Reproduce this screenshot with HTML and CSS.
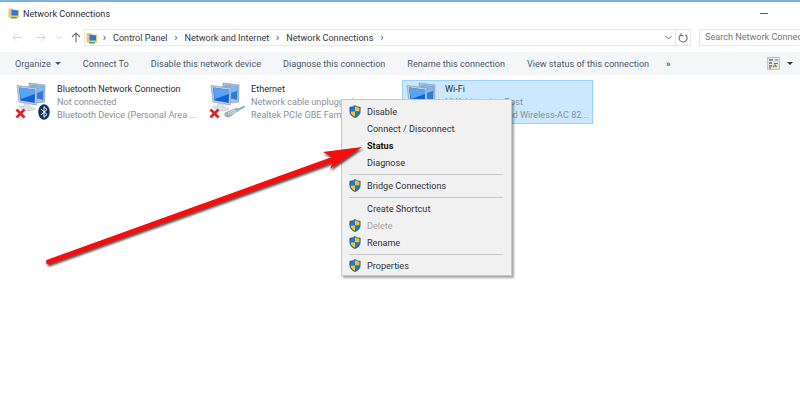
FILE: index.html
```html
<!DOCTYPE html>
<html lang="en">
<head>
<meta charset="utf-8">
<title>Network Connections</title>
<link rel="stylesheet" href="styles.css">
</head>
<body>
<svg class="defs" width="0" height="0" aria-hidden="true">
  <defs>
    <symbol id="shield" viewBox="0 0 12 13">
      <path d="M6 .4C4.500 1.500 2.800 2 .8 2.100V6.500C.8 9.500 3 11.600 6 12.700 9 11.600 11.200 9.500 11.200 6.500V2.100C9.200 2 7.500 1.500 6 .4Z" fill="#1f5f9e" stroke="#4a5a68" stroke-width=".6"/>
      <path d="M6 1.300V6.400H1.600V2.800C3.300 2.700 4.800 2.200 6 1.300Z" fill="#1a78d0"/>
      <path d="M6 1.300C7.200 2.200 8.700 2.700 10.400 2.800V6.400H6Z" fill="#f2c230"/>
      <path d="M1.600 6.400H6V11.700C3.600 10.700 1.700 9 1.600 6.400Z" fill="#f2c230"/>
      <path d="M6 6.400H10.400C10.300 9 8.400 10.700 6 11.700Z" fill="#1a78d0"/>
    </symbol>
    <symbol id="computers" viewBox="0 0 30 32">
      <path d="M13 1 29 3 28.500 20 22 21 13 14Z" fill="#a9c2da" stroke="#8f9aa5" stroke-width=".7"/>
      <path d="M15 3 27.500 4.600 27 18 15 15Z" fill="#2d7be0"/>
      <path d="M15 3 27.500 4.600 27 9 17 12Z" fill="#7db8f2"/>
      <path d="M1 3.500 21 6 20.500 23 3 20Z" fill="#c3cfda" stroke="#8f9aa5" stroke-width=".7"/>
      <path d="M3 5.500 19.200 7.700 18.800 21 4.500 18.500Z" fill="#0f62dc"/>
      <path d="M3 5.500 19.200 7.700 18.900 12 5 17Z" fill="#58a4f0"/>
      <path d="M8 21 13 21.800 13 24.500C16 25 19 26 19 27.500L13 29C8 28.500 3 26 3 24.500 5 24 7 24 8 24Z" fill="#dfe3e7" stroke="#a9b0b7" stroke-width=".5"/>
    </symbol>
    <symbol id="redx" viewBox="0 0 11 11">
      <path d="M1.500 1.500 9.500 9.500M9.500 1.500 1.500 9.500" stroke="#d9232a" stroke-width="2.700" fill="none"/>
    </symbol>
  </defs>
</svg>

<div class="window">
  <header class="titlebar">
    <svg class="title-icon" viewBox="0 0 12 12" width="12" height="12"><path d="M.5 1.500H4.500L5.500 3H11V10.500H.5Z" fill="#e8c873"/><path d="M3.500 2.500 10 3.500V8.500H3.500Z" fill="#2d78d8"/><path d="M3 10H9V11.500H3Z" fill="#3fae5a"/></svg>
    <span class="title-text">Network Connections</span>
    <span class="minimize"></span>
  </header>

  <nav class="addressbar">
    <div class="nav-buttons">
      <svg class="back" width="10" height="9" viewBox="0 0 10 9"><path d="M9.500 4.500H1M4.500 1 1 4.500 4.500 8" fill="none" stroke="#d4d7da"/></svg>
      <svg class="forward" width="10" height="9" viewBox="0 0 10 9"><path d="M.5 4.500H9M5.500 1 9 4.500 5.500 8" fill="none" stroke="#d4d7da"/></svg>
      <svg class="recent" width="6" height="5" viewBox="0 0 6 5"><path d="M.5 1 3 3.500 5.500 1" fill="none" stroke="#d4d7da"/></svg>
      <svg class="up" width="10" height="11" viewBox="0 0 10 11"><path d="M5 10.500V1M1 5 5 1 9 5" fill="none" stroke="#6a6f74" stroke-width="1.100"/></svg>
    </div>
    <div class="path-box">
      <div class="crumbs">
        <svg class="crumb-icon" viewBox="0 0 12 12" width="12" height="12"><path d="M.5 1H4.500L5.500 2.500H11V10.500H.5Z" fill="#e8c873"/><path d="M3.500 2.500 10 3.500V8.500H3.500Z" fill="#2d78d8"/><path d="M3 10H9V11.500H3Z" fill="#3fae5a"/></svg>
        <span class="sep">›</span><span>Control Panel</span>
        <span class="sep">›</span><span>Network and Internet</span>
        <span class="sep">›</span><span>Network Connections</span>
        <span class="sep">›</span>
      </div>
      <svg class="dropdown" width="7" height="5" viewBox="0 0 7 5"><path d="M.5 1 3.500 4 6.500 1" fill="none" stroke="#6a6f74"/></svg>
      <div class="refresh">
        <svg width="10" height="10" viewBox="0 0 10 10"><path d="M7.500 1.800A4 4 0 1 1 3 1.600M3 .2V2.600H5.400" fill="none" stroke="#6a6f74" stroke-width="1.100"/></svg>
      </div>
    </div>
    <div class="search-box">Search Network Connections</div>
  </nav>

  <div class="toolbar">
    <span class="tool organize">Organize<i class="caret"></i></span>
    <span class="tool">Connect To</span>
    <span class="tool">Disable this network device</span>
    <span class="tool">Diagnose this connection</span>
    <span class="tool">Rename this connection</span>
    <span class="tool">View status of this connection</span>
    <span class="tool more">»</span>
    <span class="view-options">
      <svg width="13" height="13" viewBox="0 0 13 13"><rect x=".5" y=".5" width="12" height="12" fill="#e4e6e8" stroke="#c4c7ca"/><path d="M2 3H6M2 6H5M2 9H5" stroke="#6a7680" stroke-width="1.400"/><path d="M8 3H11M7 6.500H11" stroke="#6a7680"/><path d="M6 10 8 8 9.500 10" fill="none" stroke="#5aa53a" stroke-width="1.400"/><rect x="2" y="10" width="2" height="2" fill="#d99a3a"/></svg>
      <i class="caret dark"></i>
    </span>
  </div>

  <main class="connections">
    <article class="conn">
      <div class="conn-icon">
        <svg class="pc" width="30" height="32"><use href="#computers"/></svg>
        <svg class="x" width="11" height="11"><use href="#redx"/></svg>
        <svg class="badge" width="12" height="16" viewBox="0 0 12 16"><ellipse cx="6" cy="8" rx="5.800" ry="7.800" fill="#12375f"/><path d="M3 5 9 10.500 6 13.300V2.700L9 5.500 3 11" fill="none" stroke="#fff"/></svg>
      </div>
      <div class="conn-text">
        <div class="name">Bluetooth Network Connection</div>
        <div class="sub">Not connected</div>
        <div class="sub">Bluetooth Device (Personal Area ...</div>
      </div>
    </article>
    <article class="conn">
      <div class="conn-icon">
        <svg class="pc" width="30" height="32"><use href="#computers"/></svg>
        <svg class="x" width="11" height="11"><use href="#redx"/></svg>
        <svg class="badge plug" width="22" height="13" viewBox="0 0 22 13"><path d="M1 8 13 3 15 5 5 12 1 11Z" fill="#a9b6c2" stroke="#7d8894" stroke-width=".6"/><path d="M4 8 11 5M6 9.500 12 6.500" stroke="#e9edf0" stroke-width=".8"/><path d="M14 3.500 21 .5 20 3 15.500 5Z" fill="#6fa9d6"/></svg>
      </div>
      <div class="conn-text">
        <div class="name">Ethernet</div>
        <div class="sub">Network cable unplugged</div>
        <div class="sub">Realtek PCIe GBE Family Controller</div>
      </div>
    </article>
    <article class="conn selected">
      <div class="conn-icon">
        <svg class="pc" width="30" height="32"><use href="#computers"/></svg>
      </div>
      <div class="conn-text">
        <div class="name">Wi-Fi</div>
        <div class="sub">NVA Listening Post</div>
        <div class="sub">Intel(R) Dual Band Wireless-AC 82...</div>
      </div>
    </article>
  </main>
</div>

<ul class="menu">
  <li class="item"><svg class="shield"><use href="#shield"/></svg>Disable</li>
  <li class="item">Connect / Disconnect</li>
  <li class="item bold">Status</li>
  <li class="item">Diagnose</li>
  <li class="rule"></li>
  <li class="item"><svg class="shield"><use href="#shield"/></svg>Bridge Connections</li>
  <li class="rule"></li>
  <li class="item">Create Shortcut</li>
  <li class="item muted"><svg class="shield"><use href="#shield"/></svg>Delete</li>
  <li class="item"><svg class="shield"><use href="#shield"/></svg>Rename</li>
  <li class="rule"></li>
  <li class="item"><svg class="shield"><use href="#shield"/></svg>Properties</li>
</ul>

<svg class="arrow" width="800" height="410" viewBox="0 0 800 410" aria-hidden="true">
  <defs>
    <filter id="arrow-shadow" x="-5%" y="-10%" width="110%" height="125%">
      <feDropShadow dx="1" dy="2" stdDeviation="1.200" flood-color="#000" flood-opacity=".7"/>
    </filter>
  </defs>
  <path d="M46.500 260 332 157 323 152 362 147 330 169 332.500 162.500 48.500 264.500Q45 264 46.500 260Z" fill="#f60808" filter="url(#arrow-shadow)"/>
</svg>
```
FILE: styles.css
```css
* { box-sizing: border-box; }
html, body { margin: 0; padding: 0; }
body {
  width: 800px;
  height: 410px;
  overflow: hidden;
  position: relative;
  background: #fff;
  font-family: Roboto, "Open Sans", sans-serif;
  font-size: 9.100px;
  color: #3b4047;
}
.defs { position: absolute; }
.window { border-top: 2px solid #7fb0da; height: 100%; display: flex; flex-direction: column; }

.titlebar { display: flex; align-items: center; height: 22px; padding: 0 8px; gap: 3px; flex: none; }
.title-text { color: #2c2f33; padding-top: 2px; }
.minimize { margin-left: auto; margin-right: 24px; width: 8px; height: 1px; background: #555; }

.addressbar { display: flex; align-items: center; height: 17px; margin-top: 5px; padding-left: 12px; flex: none; }
.nav-buttons { display: flex; align-items: center; width: 72px; flex: none; }
.forward { margin-left: 14px; }
.recent { margin-left: 10px; }
.up { margin-left: 9px; }
.path-box { width: 607px; height: 17px; flex: none; display: flex; align-items: center; border: 1px solid #e6e8ea; }
.crumbs { display: flex; align-items: center; gap: 6px; padding-left: 1px; color: #33373c; flex: 1; }
.crumb-icon { margin-right: -2px; }
.sep { color: #555; font-size: 11px; width: 5px; text-align: center; }
.dropdown { margin-right: 3px; }
.refresh { width: 15px; height: 15px; border-left: 1px solid #e6e8ea; display: flex; align-items: center; justify-content: center; }
.search-box { margin-left: 8px; flex: 1; height: 17px; border: 1px solid #e6e8ea; border-right: 0; padding-left: 5px; line-height: 15px; white-space: nowrap; overflow: hidden; color: #777; }

.toolbar { display: flex; align-items: center; height: 23px; margin-top: 6px; background: #f5f6f7; padding-left: 15px; gap: 22px; flex: none; color: #4a5a6c; }
.tool { white-space: nowrap; }
.organize { display: flex; align-items: center; gap: 4px; }
.caret { width: 0; height: 0; border: 3px solid transparent; border-top-color: #4a5a6c; border-bottom: 0; }
.caret.dark { border-top-color: #333; }
.more { font-weight: 700; margin-left: -5px; }
.view-options { margin-left: auto; margin-right: 7px; display: flex; align-items: center; gap: 7px; }

.connections { display: flex; align-items: flex-start; padding: 5px 0 0 15px; flex: none; }
.conn { width: 194px; height: 44px; display: flex; flex: none; }
.conn.selected { width: 191px; background: #cce8ff; border: 1px solid #99d1ff; margin-left: -1px; }
.conn-icon { position: relative; width: 42px; height: 42px; flex: none; }
.pc { position: absolute; left: 1px; top: 2px; }
.x { position: absolute; left: 0; top: 28px; }
.badge { position: absolute; left: 23px; top: 24px; }
.badge.plug { left: 15px; top: 25px; }
.selected .pc { left: 3px; top: 1px; }
.conn-text { white-space: nowrap; overflow: hidden; line-height: 13px; padding-top: 3px; }
.selected .conn-text { padding-top: 2px; }
.name { color: #2a2d31; }
.sub { color: #8b8f94; }

.menu {
  position: absolute;
  left: 341px;
  top: 99px;
  width: 171px;
  margin: 0;
  padding: 3px 2px 1px 2px;
  list-style: none;
  background: #f1f1f1;
  border: 1px solid #c9c9c9;
  box-shadow: 2px 2px 2px rgba(0,0,0,.35);
  color: #2f3236;
}
.item { position: relative; height: 17px; line-height: 19px; padding-left: 23px; }
.item .shield { position: absolute; left: 5px; top: 2px; width: 12px; height: 13px; }
.bold { font-weight: 700; color: #111; }
.muted { color: #a5a5a5; }
.rule { height: 1px; margin: 2.500px 6px 2.500px 5px; background: #c8c8c8; }

.arrow { position: absolute; left: 0; top: 0; pointer-events: none; }
```
